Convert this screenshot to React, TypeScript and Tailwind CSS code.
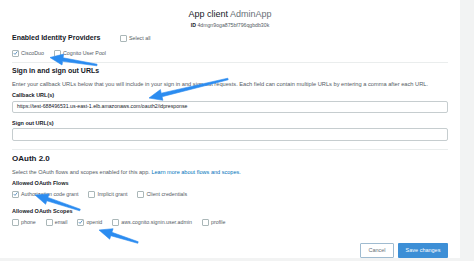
import React from "react";

const font = { fontFamily: '"Liberation Sans", Arial, sans-serif' };

function Check({ checked = false }: { checked?: boolean }) {
  return (
    <span className="w-[7px] h-[7px] shrink-0 border border-[#aab7b8] rounded-[1px] bg-white flex items-center justify-center">
      {checked && (
        <svg width="6" height="6" viewBox="0 0 10 10">
          <path d="M1.5 5.2 L4 7.8 L8.8 1.8" fill="none" stroke="#3f7fb5" strokeWidth="1.6" />
        </svg>
      )}
    </span>
  );
}

function Item({ label, checked = false }: { label: string; checked?: boolean }) {
  return (
    <span className="flex items-center gap-[2px]">
      <Check checked={checked} />
      <span className="text-[5.3px] leading-[8px] text-[#545b64]">{label}</span>
    </span>
  );
}

type P = [number, number];
function arrowPoints(tip: P, tail: P, L = 13, W = 11, w1 = 3.6, w0 = 1.6) {
  const dx = tip[0] - tail[0];
  const dy = tip[1] - tail[1];
  const len = Math.hypot(dx, dy);
  const d: P = [dx / len, dy / len];
  const n: P = [-d[1], d[0]];
  const base: P = [tip[0] - d[0] * L, tip[1] - d[1] * L];
  const pts: P[] = [
    [tail[0] + (n[0] * w0) / 2, tail[1] + (n[1] * w0) / 2],
    [base[0] + (n[0] * w1) / 2, base[1] + (n[1] * w1) / 2],
    [base[0] + (n[0] * W) / 2, base[1] + (n[1] * W) / 2],
    tip,
    [base[0] - (n[0] * W) / 2, base[1] - (n[1] * W) / 2],
    [base[0] - (n[0] * w1) / 2, base[1] - (n[1] * w1) / 2],
    [tail[0] - (n[0] * w0) / 2, tail[1] - (n[1] * w0) / 2],
  ];
  return pts.map((p) => `${p[0].toFixed(1)},${p[1].toFixed(1)}`).join(" ");
}

function Arrows() {
  const arrows: [P, P][] = [
    [[50, 57.5], [97, 65]],
    [[149, 98], [228, 79]],
    [[35, 195], [80, 210]],
    [[99, 230], [138, 242.5]],
  ];
  return (
    <svg className="absolute left-0 top-0 pointer-events-none" width="474" height="261" viewBox="0 0 474 261">
      {arrows.map(([tip, tail], i) => (
        <polygon key={i} points={arrowPoints(tip, tail)} fill="#2b8cf0" strokeLinejoin="round" stroke="#2b8cf0" strokeWidth="0.6" />
      ))}
    </svg>
  );
}

export default function App() {
  return (
    <div className="relative w-[474px] h-[261px] overflow-hidden bg-[#f2f3f3] flex items-start" style={font}>
      <div className="w-[460px] h-[258px] bg-white flex flex-col px-[12px]">
        {/* header */}
        <div className="mt-[8px] h-[12px] leading-[12px] text-center text-[9px]">
          <span className="text-[#16191f]">App client </span>
          <span className="text-[#687078]">AdminApp</span>
        </div>
        <div className="mt-[1px] h-[8px] leading-[8px] text-center text-[5.2px] text-[#545b64]">
          <span className="font-bold text-[#16191f]">ID</span> 4dmgn9oga875bf796qgbdb30k
        </div>

        {/* identity providers */}
        <div className="mt-[4px] h-[10px] flex items-center">
          <span className="w-[108px] text-[7px] font-bold text-[#16191f] leading-[10px]">Enabled Identity Providers</span>
          <Item label="Select all" />
        </div>
        <div className="mt-[6px] h-[8px] flex items-center gap-[10px]">
          <Item label="CiscoDuo" checked />
          <Item label="Cognito User Pool" />
        </div>
        <div className="mt-[5px] h-px bg-[#eaeded]" />

        {/* urls */}
        <div className="mt-[3px] h-[10px] leading-[10px] text-[7px] font-bold text-[#16191f]">Sign in and sign out URLs</div>
        <div className="mt-[5px] h-[6px] leading-[6px] text-[5.7px] text-[#545b64] whitespace-nowrap">
          Enter your callback URLs below that you will include in your sign in and sign out requests. Each field can contain multiple URLs by entering a comma after each URL.
        </div>
        <div className="mt-[5px] h-[6px] leading-[6px] text-[5.5px] font-bold text-[#16191f]">Callback URL(s)</div>
        <div className="mt-[3px] h-[12px] border border-[#c6cdcf] rounded-[2px] flex items-center pl-[4px] text-[5.2px] text-[#16191f]">
          https://test-688496531.us-east-1.elb.amazonaws.com/oauth2/idpresponse
        </div>
        <div className="mt-[7px] h-[6px] leading-[6px] text-[5.5px] font-bold text-[#16191f]">Sign out URL(s)</div>
        <div className="mt-[2px] h-[12.5px] border border-[#c6cdcf] rounded-[2px]" />
        <div className="mt-[8.5px] h-px bg-[#eaeded]" />

        {/* oauth */}
        <div className="mt-[4px] h-[10px] leading-[10px] text-[8px] font-bold text-[#16191f]">OAuth 2.0</div>
        <div className="mt-[5px] h-[6px] leading-[6px] text-[5.55px] text-[#545b64] whitespace-nowrap">
          Select the OAuth flows and scopes enabled for this app. <span className="text-[#0073bb]">Learn more about flows and scopes.</span>
        </div>
        <div className="mt-[5px] h-[6px] leading-[6px] text-[5.5px] font-bold text-[#16191f]">Allowed OAuth Flows</div>
        <div className="mt-[4px] h-[8px] flex items-center gap-[10px]">
          <Item label="Authorization code grant" checked />
          <Item label="Implicit grant" />
          <Item label="Client credentials" />
        </div>
        <div className="mt-[10px] h-[6px] leading-[6px] text-[5.5px] font-bold text-[#16191f]">Allowed OAuth Scopes</div>
        <div className="mt-[4px] h-[8px] flex items-center gap-[10px]">
          <Item label="phone" />
          <Item label="email" />
          <Item label="openid" checked />
          <Item label="aws.cognito.signin.user.admin" />
          <Item label="profile" />
        </div>

        {/* buttons */}
        <div className="mt-auto mb-0 h-[15px] flex justify-end gap-[4px]">
          <button className="w-[34px] h-[15px] border border-[#9fbbd0] bg-white text-[5.5px] text-[#687078] rounded-[1px]">Cancel</button>
          <button className="w-[50px] h-[15px] bg-[#3d8fd6] text-[5.5px] text-white rounded-[1px]">Save changes</button>
        </div>
      </div>
      <Arrows />
    </div>
  );
}
